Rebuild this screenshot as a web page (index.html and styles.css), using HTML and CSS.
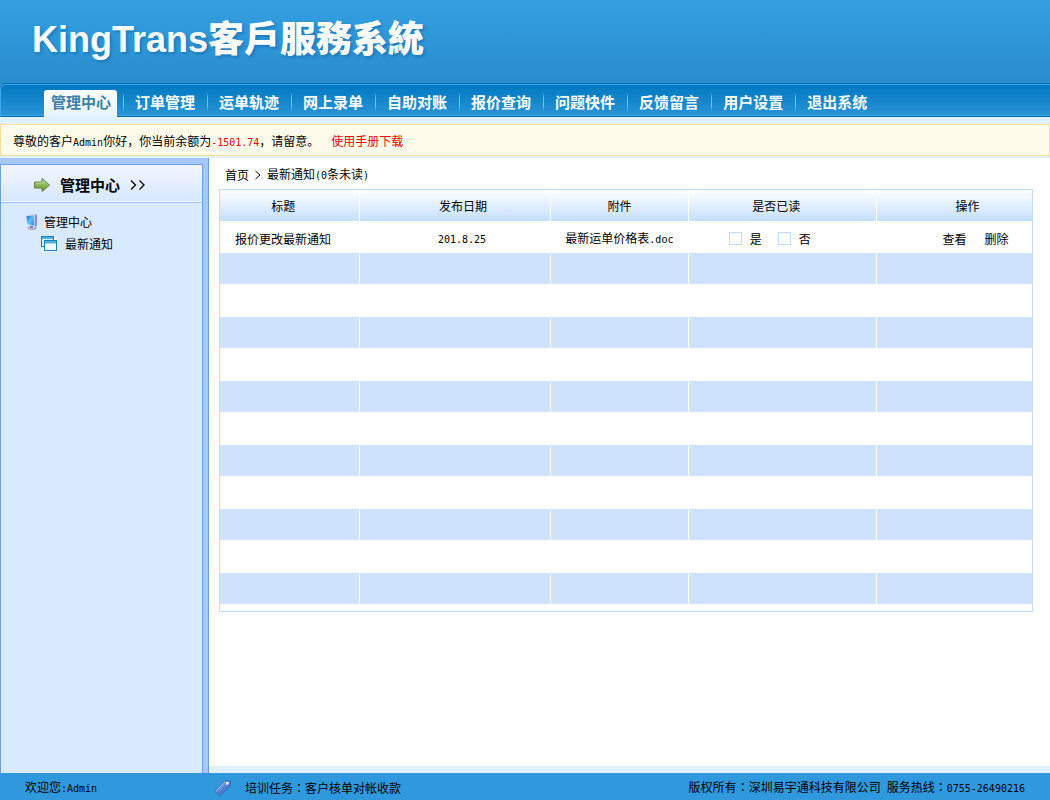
FILE: index.html
```html
<!DOCTYPE html>
<html lang="zh-CN">
<head>
<meta charset="utf-8">
<title>KingTrans客戶服務系統</title>
<link rel="stylesheet" href="styles.css">
</head>
<body>
<header class="top">
  <div class="banner">
    <h1 class="logo">KingTrans<span class="logo-cjk" lang="zh-TW">客戶服務系統</span></h1>
  </div>
  <nav class="nav">
    <a class="tab active" href="#">管理中心</a>
    <a class="tab" href="#">订单管理</a>
    <a class="tab" href="#">运单轨迹</a>
    <a class="tab" href="#">网上录单</a>
    <a class="tab" href="#">自助对账</a>
    <a class="tab" href="#">报价查询</a>
    <a class="tab" href="#">问题快件</a>
    <a class="tab" href="#">反馈留言</a>
    <a class="tab" href="#">用户设置</a>
    <a class="tab" href="#">退出系统</a>
  </nav>
</header>
<div class="notice">
  <p>尊敬的客户<span class="mono">Admin</span>你好，你当前余额为<span class="mono red">-1501.74</span>，请留意。</p>
  <a class="red" href="#">使用手册下载</a>
</div>
<div class="body">
  <aside class="side">
    <div class="panel">
      <h2 class="panel-head">
        <svg class="icon" viewBox="0 0 16 16" width="16" height="16" aria-hidden="true">
          <defs><linearGradient id="arrow" x1="0" y1="0" x2="0" y2="1"><stop offset="0" stop-color="#b3cf87"/><stop offset=".5" stop-color="#8fb555"/><stop offset="1" stop-color="#5f9138"/></linearGradient></defs>
          <path d="M.5 5H8V1.500L15.500 8L8 14.500V11H.5Z" fill="url(#arrow)" stroke="#5b8440"/>
          <path d="M1.500 6H9V3.800L13.500 8" fill="none" stroke="#c6dca6" stroke-width=".8"/>
        </svg>
        <span>管理中心</span>
        <svg class="chevrons" viewBox="0 0 16 12" width="16" height="12" aria-hidden="true"><path d="M1 1.500L5.500 6L1 10.500M9.500 1.500L14 6L9.500 10.500" fill="none" stroke="#000" stroke-width="1.300"/></svg>
      </h2>
      <ul class="tree">
        <li><a href="#">
          <svg class="icon" viewBox="0 0 14 16" width="14" height="16" aria-hidden="true">
            <defs><linearGradient id="screen" x1="0" y1="0" x2="1" y2="1"><stop offset="0" stop-color="#1c62d8"/><stop offset=".5" stop-color="#5dc0fb"/><stop offset="1" stop-color="#2b86ea"/></linearGradient></defs>
            <ellipse cx="8" cy="14" rx="4.500" ry="1.900" fill="#9d98c4"/>
            <ellipse cx="7.500" cy="13.600" rx="3.500" ry="1.200" fill="#d8d2e4"/>
            <path d="M6 11L9 12V14H6Z" fill="#6f78bd"/>
            <path d="M1.500 1.500L11 0L13 1V11.500L11 13L3 11Z" fill="#d3d9f0"/>
            <path d="M11 0L13 1V11.500L11 13Z" fill="#7e92d2"/>
            <path d="M2.500 2.300L10.200 1.200V11.700L3.700 10.100Z" fill="url(#screen)"/>
          </svg>
          <span>管理中心</span></a>
          <ul class="subtree">
            <li><a href="#">
              <svg class="icon" viewBox="0 0 16 16" width="16" height="16" aria-hidden="true">
                <rect width="16" height="16" fill="#edf5fd"/>
                <rect x=".5" y=".5" width="12" height="10" fill="#dff0fa" stroke="#1583b4"/>
                <path d="M1 1H12V3H1Z" fill="#4fb3dc"/>
                <rect x="3.500" y="4.500" width="12" height="10" fill="#f2f9fe" stroke="#1583b4"/>
                <path d="M4 5H15V7.500H4Z" fill="#4fb3dc"/>
              </svg>
              <span>最新通知</span></a></li>
          </ul>
        </li>
      </ul>
    </div>
  </aside>
  <main class="main">
    <div class="crumbs"><a href="#">首页</a><svg viewBox="0 0 8 10" width="8" height="10" aria-hidden="true"><path d="M1.500 1L6 5L1.500 9" fill="none" stroke="#000"/></svg><span>最新通知<span class="mono">(0</span>条未读<span class="mono">)</span></span></div>
    <table class="grid">
      <colgroup><col class="c-title"><col class="c-date"><col class="c-file"><col class="c-read"><col class="c-act"></colgroup>
      <thead><tr><th class="h-title">标题</th><th class="h-date">发布日期</th><th>附件</th><th class="h-read">是否已读</th><th class="h-act">操作</th></tr></thead>
      <tbody>
        <tr class="first"><td class="d-title">报价更改最新通知</td><td class="d-date"><span class="mono">201.8.25</span></td><td>最新运单价格表<span class="mono">.doc</span></td>
          <td class="d-read"><div class="checks"><label><input type="checkbox">是</label><label><input type="checkbox">否</label></div></td>
          <td class="d-act"><div class="actions"><a href="#">查看</a><a href="#">删除</a></div></td></tr>
        <tr><td></td><td></td><td></td><td></td><td></td></tr>
        <tr><td></td><td></td><td></td><td></td><td></td></tr>
        <tr><td></td><td></td><td></td><td></td><td></td></tr>
        <tr><td></td><td></td><td></td><td></td><td></td></tr>
        <tr><td></td><td></td><td></td><td></td><td></td></tr>
        <tr><td></td><td></td><td></td><td></td><td></td></tr>
        <tr><td></td><td></td><td></td><td></td><td></td></tr>
        <tr><td></td><td></td><td></td><td></td><td></td></tr>
        <tr><td></td><td></td><td></td><td></td><td></td></tr>
        <tr><td></td><td></td><td></td><td></td><td></td></tr>
        <tr><td></td><td></td><td></td><td></td><td></td></tr>
        <tr class="last"><td></td><td></td><td></td><td></td><td></td></tr>
      </tbody>
    </table>
  </main>
</div>
<footer class="foot">
  <span class="welcome">欢迎您<span class="mono">:Admin</span></span>
  <span class="task">
    <svg class="icon" viewBox="0 0 18 18" width="18" height="18" aria-hidden="true">
      <defs><linearGradient id="tag" x1="0" y1="0" x2="1" y2="1"><stop offset="0" stop-color="#8cbcf2"/><stop offset="1" stop-color="#2450b4"/></linearGradient></defs>
      <path d="M1 11.500L10.500 2L15.500 1.500L16.500 2.500L16 7.500L6 16.500H5L1 12.500Z" fill="url(#tag)" stroke="#3a68bd" stroke-width=".9"/>
      <path d="M2.500 11.500L11 3" stroke="#b5d5f8" stroke-width=".8"/>
      <rect x="12" y="3" width="2.500" height="2.500" fill="#fff"/>
    </svg>
    <span>培训任务<span lang="zh-TW" class="tc">：</span>客户核单对帐收款</span>
  </span>
  <span>版权所有<span lang="zh-TW" class="tc">：</span>深圳易宇通科技有限公司<span class="mono"> </span>服务热线<span lang="zh-TW" class="tc">：</span><span class="mono">0755-26490216</span></span>
</footer>
</body>
</html>
```

FILE: styles.css
```css
* { box-sizing: border-box; }

body {
  margin: 0;
  min-height: 100vh;
  display: flex;
  flex-direction: column;
  background: #dff1fe;
  color: #000;
  font: 12px/18px "Noto Sans CJK SC", sans-serif;
}

a { color: inherit; text-decoration: none; }
p, h1, h2, ul { margin: 0; padding: 0; }
ul { list-style: none; }
svg { flex: none; display: block; }

.mono { font-family: "DejaVu Sans Mono", monospace; font-size: 10px; }
.tc { font-family: "Noto Sans CJK TC", sans-serif; }
.red { color: #f00; }

.top { background: #298dcd; }
.banner {
  height: 84px;
  padding: 16px 32px 0;
  background: linear-gradient(#339fe1, #298dcd);
}
.logo {
  color: #fff;
  font: bold 36px/48px "Liberation Sans", "Noto Sans CJK TC", sans-serif;
  text-shadow: 2px 2px 3px rgba(0, 60, 120, .3);
}
.logo-cjk { font-weight: 900; }

.nav {
  display: flex;
  height: 33px;
  padding: 5px 0 0 43px;
  background: linear-gradient(#0079c0, #2b94d7);
  border: 1px solid #3ba6e8;
  border-right: 0;
  border-bottom-color: #0068a8;
  border-radius: 6px 0 0 0;
  box-shadow: 0 -1px #006fb2, inset 0 -1px #3ba6e8;
}
.tab {
  padding: 0 12px;
  color: #fff;
  font-size: 15px;
  font-weight: bold;
  line-height: 23px;
  background: linear-gradient(rgba(112, 193, 243, 0), #70c1f3 30%, #70c1f3 70%, rgba(112, 193, 243, 0)) 0 2px / 1px 20px no-repeat;
}
.tab.active {
  margin: 0 6px -1px 0;
  padding: 0 6px 0 7px;
  color: #3a80a8;
  background: linear-gradient(#fff, #e4f3fe);
  border-radius: 3px 3px 0 0;
}

.notice {
  display: flex;
  gap: 12px;
  margin: 7px 0 2px;
  padding: 8px 12px 6px;
  height: 32px;
  line-height: 16px;
  background: #fffceb;
  border: 1px solid #fddc98;
}

.body { flex: 1; display: flex; }
.side {
  width: 209px;
  padding: 6px 5px 0 0;
  display: flex;
  background: #a6c8f9;
  border-right: 1px solid #6b9be2;
}
.panel {
  flex: 1;
  background: #d9e9ff;
  border: 1px solid #6b9fe6;
  border-bottom: 0;
}
.panel-head {
  display: flex;
  align-items: center;
  gap: 10px;
  height: 38px;
  padding: 3px 0 0 33px;
  font-size: 15px;
  background: linear-gradient(#f2f6ff, #d6e7fe);
  border-bottom: 1px solid #98c1f4;
  box-shadow: inset 0 -1px #f7fbff;
}
.tree { padding: 8px 0 0 23px; }
.tree a { display: flex; align-items: center; gap: 6px; height: 22px; }
.subtree { padding-left: 17px; }
.subtree a { gap: 8px; }

.main {
  flex: 1;
  min-width: 0;
  margin-bottom: 7px;
  padding: 8px 17px 0 10px;
  background: #fff;
}
.crumbs {
  display: flex;
  align-items: center;
  gap: 5px;
  height: 23px;
  padding: 0 6px 5px;
}

.grid {
  width: 100%;
  table-layout: fixed;
  border-collapse: separate;
  border-spacing: 0;
  border: 1px solid #c2dcff;
}
.c-title { width: 17.2%; }
.c-date { width: 23.6%; }
.c-file { width: 16.9%; }
.c-read { width: 23.2%; }
.grid th, .grid td {
  height: 33px;
  padding: 0;
  font-weight: normal;
  text-align: center;
  border-right: 1px solid #fff;
}
.grid th:last-child, .grid td:last-child { border-right: 0; }
.grid th { height: 31px; background: linear-gradient(#fff, #c4dffe); }
.grid tbody tr:nth-child(even) td { height: 31px; background: #cfe2fc; }
.grid .first td { height: 32px; padding-top: 3px; }
.grid .last td { height: 7px; }
.grid .h-title, .grid .h-read { padding-right: 12px; }
.grid .h-date { padding-left: 16px; }
.grid .h-act { padding-left: 26px; }
.grid .d-title { padding-left: 15px; text-align: left; }
.grid .d-date { padding-left: 14px; }
.grid .d-read { padding-right: 25px; }
.grid .d-act { padding-left: 42px; }

.checks, .actions { display: flex; justify-content: center; gap: 16px; }
.actions { gap: 18px; }
.checks label { display: flex; align-items: center; gap: 8px; }
.checks input {
  appearance: none;
  width: 13px;
  height: 13px;
  margin: 0;
  background: #fff;
  border: 1px solid #c2dcff;
}
.checks input:checked { background: #6b9fe6; }

.foot {
  display: grid;
  grid-template-columns: 189px 1fr auto;
  align-items: center;
  height: 27px;
  padding: 2px 25px 0;
  background: #3099dd;
}
.task { display: flex; align-items: center; gap: 13px; }
```
